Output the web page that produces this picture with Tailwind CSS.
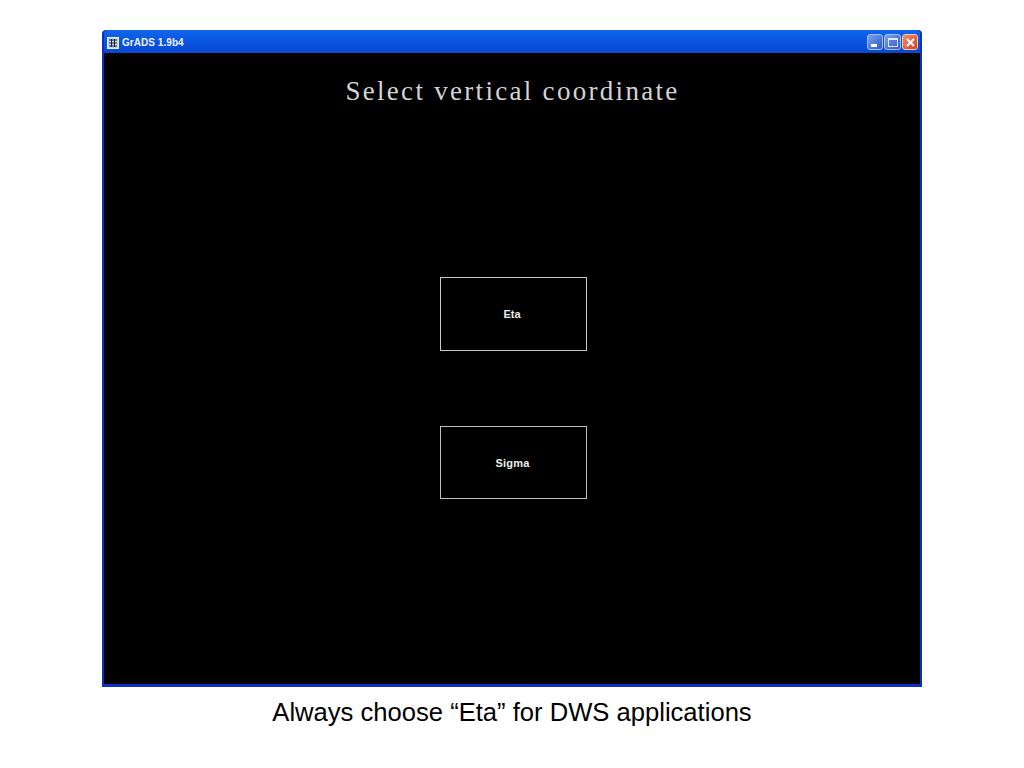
<!DOCTYPE html>
<html>
<head>
<meta charset="utf-8">
<script src="https://cdn.jsdelivr.net/npm/@tailwindcss/browser@4"></script>
</head>
<body class="bg-white">
<div class="w-[1024px] h-[768px] overflow-hidden pt-[30px] pl-[102px] font-['Liberation_Sans',sans-serif]">
  <div class="w-[820px] h-[657px] flex flex-col bg-[#0b30c4] rounded-t-[4px] px-[2px] pb-[3px]">
    <div class="h-[23px] shrink-0 flex items-center pl-[3px] pr-[2px] pt-[2px] rounded-t-[4px] bg-gradient-to-b from-[#0f66ec] via-[#0a55e2] to-[#0848d0]">
      <svg width="12" height="12" viewBox="0 0 12 12" class="shrink-0">
        <rect x="0.5" y="0.5" width="11" height="11" fill="#c8d4e8" stroke="#e8eef8"/>
        <path d="M2 3H10M2 6H10M2 9H10M4.5 2V10M7.5 2V10" stroke="#1c2440" stroke-width="1"/>
      </svg>
      <span class="ml-[3px] text-[#eef3ff] text-[10px] font-bold tracking-[0.05px] leading-none">GrADS 1.9b4</span>
      <div class="ml-auto flex gap-[1px] -mt-[1px]">
        <div class="w-[16px] h-[16px] rounded-[3px] border border-[#a8c0f0] bg-gradient-to-br from-[#7fa2ee] to-[#2f55c8] relative">
          <div class="absolute left-[3px] bottom-[2px] w-[6px] h-[3px] bg-white"></div>
        </div>
        <div class="w-[17px] h-[16px] rounded-[3px] border border-[#a8c0f0] bg-gradient-to-br from-[#7fa2ee] to-[#2f55c8] flex items-center justify-center">
          <div class="w-[10px] h-[9px] border border-[#dfe8fb] border-t-2"></div>
        </div>
        <div class="w-[16px] h-[16px] rounded-[3px] border border-[#f0c8b8] bg-gradient-to-br from-[#ee9070] to-[#cf3a15] flex items-center justify-center">
          <svg width="11" height="11" viewBox="0 0 11 11"><path d="M2 2L9 9M9 2L2 9" stroke="#fff" stroke-width="2"/></svg>
        </div>
      </div>
    </div>
    <div class="flex-1 bg-black flex flex-col items-center text-white">
      <div class="mt-[25px] h-[26px] flex items-center text-[27px] leading-none tracking-[2.3px] text-[#d4d4d4] font-['Liberation_Serif',serif] whitespace-nowrap ml-[1px]">Select vertical coordinate</div>
      <div class="mt-[173px] ml-[2px] w-[147px] h-[74px] border border-[#c8c8c8] flex items-center justify-center pr-[2px] text-[11px] font-bold text-[#eeeeee]">Eta</div>
      <div class="mt-[75px] ml-[2px] w-[147px] h-[73px] border border-[#c0c0c0] flex items-center justify-center pr-[1px] pt-[1px] text-[11px] tracking-[0.2px] font-bold text-[#eeeeee]">Sigma</div>
    </div>
  </div>
  <div class="w-[820px] mt-[9px] text-center text-[25.6px] leading-[32px] text-black whitespace-nowrap">Always choose “Eta” for DWS applications</div>
</div>
</body>
</html>
